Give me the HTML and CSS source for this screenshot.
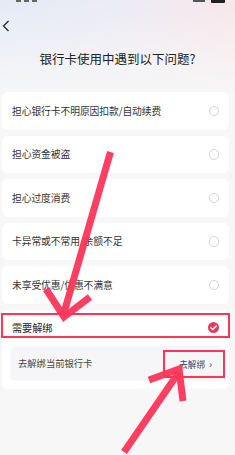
FILE: index.html
```html
<!DOCTYPE html>
<html lang="zh">
<head>
<meta charset="utf-8">
<link rel="stylesheet" href="styles.css">
</head>
<body>
<div class="page">
  <div class="status"><span class="time"><i></i><i></i><i></i></span><span class="sicons"><span class="sig"></span><span class="bat"></span></span></div>
  <div class="nav">
    <svg class="back" width="8" height="12" viewBox="0 0 8 12"><path d="M6.5 1 L1.5 6 L6.5 11" fill="none" stroke="#222" stroke-width="1.2"/></svg>
  </div>
  <h1 class="title">银行卡使用中遇到以下问题?</h1>
  <div class="list">
    <div class="card"><div class="row"><span class="label">担心银行卡不明原因扣款/自动续费</span><span class="radio"></span></div></div>
    <div class="card"><div class="row"><span class="label">担心资金被盗</span><span class="radio"></span></div></div>
    <div class="card"><div class="row"><span class="label">担心过度消费</span><span class="radio"></span></div></div>
    <div class="card"><div class="row"><span class="label">卡异常或不常用/余额不足</span><span class="radio"></span></div></div>
    <div class="card"><div class="row"><span class="label">未享受优惠/优惠不满意</span><span class="radio"></span></div></div>
    <div class="card card-open">
      <div class="row row-head"><span class="label label-strong">需要解绑</span>
        <span class="checked"><svg width="11" height="11" viewBox="0 0 10 10"><path d="M2.6 5.2 L4.4 6.9 L7.5 3.6" fill="none" stroke="#fff" stroke-width="1.3" stroke-linecap="round" stroke-linejoin="round"/></svg></span>
      </div>
      <div class="sub"><span class="sub-label">去解绑当前银行卡</span><span class="sub-link">去解绑 <span class="chev">›</span></span></div>
    </div>
  </div>
  <div class="mark mark-row"></div>
  <div class="mark mark-link"></div>
  <svg class="arrows" width="235" height="455" viewBox="0 0 235 455">
    <g fill="none" stroke="#fe3558" stroke-width="7" stroke-opacity="0.95">
      <path d="M110.5 152 L63 316"/>
      <path d="M46 289 L64 317 L90 297" stroke-linejoin="miter"/>
      <path d="M124 452 L179 372"/>
      <path d="M149 380 L179 369 L183 401" stroke-linejoin="miter"/>
    </g>
  </svg>
</div>
</body>
</html>
```
FILE: styles.css
```css
* { box-sizing: border-box; }
html, body { margin: 0; padding: 0; }
body {
  font-family: "Noto Sans CJK SC", "Noto Sans", sans-serif;
  background: #f7f7f7;
}
.page {
  position: relative;
  width: 235px;
  height: 455px;
  overflow: hidden;
  background: linear-gradient(180deg, rgba(247,247,247,0) 0px, #f7f7f7 95px),
              linear-gradient(90deg, #e4eaf6 0%, #ecebf3 55%, #f8e6ea 100%);
}
.status {
  height: 14px;
  display: flex;
  justify-content: space-between;
  align-items: flex-start;
  padding: 0 10px 0 16px;
}
.time { display: flex; gap: 3px; }
.time i { display: block; width: 5px; height: 1.5px; background: #666; }
.sicons { display: flex; gap: 6px; }
.sig { width: 12px; height: 2px; background: #555; }
.bat { width: 14px; height: 3px; background: #222; border-radius: 0 0 1px 1px; }
.nav {
  height: 24px;
  display: flex;
  align-items: center;
  padding-left: 2px;
}
.back { display: block; }
.title {
  margin: 13px 0 0;
  height: 16px;
  font-size: 12.5px;
  line-height: 16px;
  font-weight: 400;
  text-align: center;
  color: #222;
}
.list {
  margin-top: 25px;
  padding: 0 6px 0 2px;
}
.card {
  background: #fff;
  border-radius: 6px;
  margin-bottom: 6px;
}
.row {
  height: 37.5px;
  display: flex;
  align-items: center;
  justify-content: space-between;
  padding: 0 10px 0 10px;
}
.label {
  font-size: 9.8px;
  color: #333;
  letter-spacing: -0.1px;
}
.label-strong { color: #222; font-size: 10.2px; }
.radio {
  width: 10.5px;
  height: 10.5px;
  border-radius: 50%;
  border: 1px solid #d4d4d4;
}
.checked {
  width: 11px;
  height: 11px;
  border-radius: 50%;
  background: #e83a5e;
  display: flex;
}
.card-open { padding-bottom: 8.5px; }
.row-head { height: 36px; }
.sub {
  margin: 0 4px 0 8px;
  height: 35px;
  background: #f6f6f8;
  border-radius: 6px;
  display: flex;
  align-items: center;
  justify-content: space-between;
  padding: 0 13px 0 8px;
}
.sub-label { font-size: 9.3px; color: #444; }
.sub-link { font-size: 8.6px; color: #2f4268; }
.chev { display: inline-block; margin-left: 2px; font-size: 10px; }
.mark {
  position: absolute;
  border: 2.5px solid #fe3558;
}
.mark-row { left: 1px; top: 313px; width: 229px; height: 25px; }
.mark-link { left: 163px; top: 350px; width: 62px; height: 28px; }
.arrows { position: absolute; left: 0; top: 0; }
```
